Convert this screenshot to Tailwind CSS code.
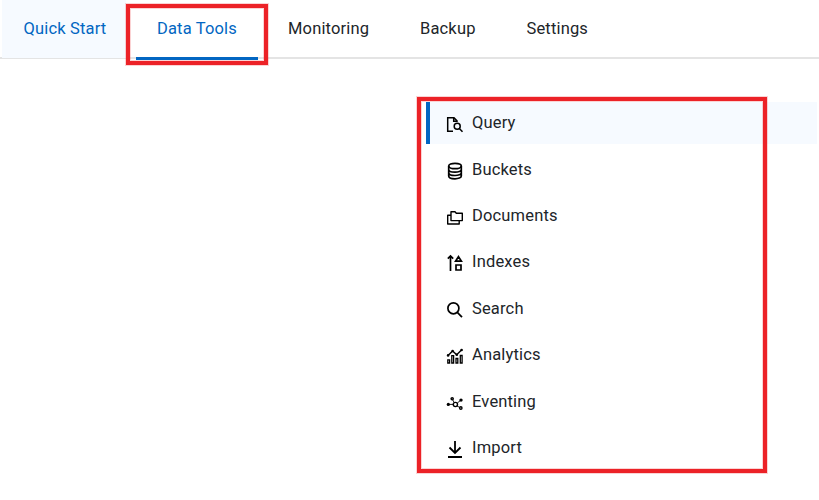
<!DOCTYPE html>
<html lang="en">
<head>
<meta charset="utf-8">
<title>Data Tools</title>
<script src="https://cdn.jsdelivr.net/npm/@tailwindcss/browser@4"></script>
</head>
<body class="relative h-[500px] w-[819px] overflow-hidden bg-white font-['Roboto',sans-serif] text-[16.5px] leading-6 tracking-[0.16px] text-[#212529]">
<nav class="flex h-[59px] whitespace-nowrap border-b-2 border-[#e4e4e4]">
  <a class="ml-[2px] h-[58px] w-[124px] bg-[#f6faff] pl-[21.5px] pt-[17px] text-[#0266c2]">Quick Start</a>
  <a class="ml-[10px] h-[60px] w-[122px] border-b-[3px] border-[#0266c2] pl-[21px] pt-[17px] text-[#0266c2]">Data Tools</a>
  <a class="ml-[9px] w-[123px] pl-[21px] pt-[17px]">Monitoring</a>
  <a class="ml-[9px] w-[98px] pl-[21px] pt-[17px]">Backup</a>
  <a class="ml-[9px] pl-[20.5px] pt-[17px]">Settings</a>
</nav>
<ul class="ml-[426px] mt-[43px] flex w-[391px] flex-col gap-[4.43px]">
  <li class="flex h-[42px] items-center border-l-4 border-[#0266c2] bg-[#f6faff] pl-[16px]">
    <svg class="mt-1 mr-2 size-[18px]" viewBox="0 0 18 18" fill="none" stroke="#000" stroke-width="1.5"><path d="M7 15.3H1.7V1.7H8L11 4.7V6M7.7 2V5.2H11"/><circle cx="11.2" cy="10.2" r="3"/><path d="M13.3 12.4L16.5 15.8"/></svg>
    <span>Query</span></li>
  <li class="flex h-[42px] items-center pl-[20px]">
    <svg class="mt-[3px] mr-2 size-[18px]" viewBox="0 0 18 18" fill="none" stroke="#000" stroke-width="1.7"><ellipse cx="9" cy="4" rx="6.3" ry="2.7"/><path d="M2.7 4V14C2.7 17.7 15.3 17.7 15.3 14V4M2.7 7.4C2.7 11 15.3 11 15.3 7.4M2.7 10.7C2.7 14.4 15.3 14.4 15.3 10.7"/></svg>
    <span class="pt-px">Buckets</span></li>
  <li class="flex h-[42px] items-center pl-[20px]">
    <svg class="mt-[5px] mr-2 size-[18px]" viewBox="0 0 18 18" fill="none" stroke="#000" stroke-width="1.4" stroke-linejoin="round"><path d="M5 2.8H9L10.3 4.3H16.3V11.6H5ZM4.7 6.2H1.7V15H13.2V12"/></svg>
    <span>Documents</span></li>
  <li class="flex h-[42px] items-center pl-[20px]">
    <svg class="mt-[2px] mr-2 size-[18px]" viewBox="0 0 18 18" fill="none" stroke="#000" stroke-width="1.7"><path d="M4.5 17V2M1.8 4.7L4.5 2L7.2 4.7M12.5 2.6L15.4 7.2H9.6ZM10 11H15V16H10Z"/></svg>
    <span>Indexes</span></li>
  <li class="flex h-[42px] items-center pl-[20px]">
    <svg class="mt-[3px] mr-2 size-[18px]" viewBox="0 0 18 18" fill="none" stroke="#000" stroke-width="1.7"><circle cx="7.4" cy="7.3" r="5.5"/><path d="M11.3 11.3L16 16.2"/></svg>
    <span>Search</span></li>
  <li class="flex h-[42px] items-center pl-[20px]">
    <svg class="mt-[2px] mr-2 size-[18px]" viewBox="0 0 18 18" fill="none" stroke="#000" stroke-width="1.3"><path d="M1.8 16V12.8H3.6V16ZM5.8 16V8.7H7.6V16ZM10 16V11.5H11.8V16ZM14.3 16V8.5H16.1V16Z"/><path stroke-width="1.4" d="M2 8.5L6.6 4L10.7 7.8L16 2.6"/><g fill="#000" stroke="none"><circle cx="2.1" cy="8.4" r="1.3"/><circle cx="6.6" cy="4" r="1.3"/><circle cx="10.8" cy="7.7" r="1.3"/><circle cx="15.6" cy="3" r="1.3"/></g></svg>
    <span>Analytics</span></li>
  <li class="flex h-[42px] items-center pl-[20px]">
    <svg class="mt-[4px] mr-2 size-[18px]" viewBox="0 0 18 18" fill="none" stroke="#000" stroke-width="1.4"><circle cx="9.4" cy="9.5" r="2.1"/><path stroke-width=".9" d="M3 9.4H7M8.2 7.6L6.8 5M11.3 8L14.5 5.4M11 11L13.7 12.4"/><circle cx="6.2" cy="3.8" r="1.1"/><circle cx="14.8" cy="13" r="1.2"/><g fill="#000" stroke="none"><circle cx="2.3" cy="9.4" r="1.6"/><circle cx="15" cy="5.1" r="1.7"/></g></svg>
    <span>Eventing</span></li>
  <li class="flex h-[42px] items-center pl-[20px]">
    <svg class="mt-[3px] mr-2 size-[18px]" viewBox="0 0 18 18" fill="none" stroke="#000" stroke-width="1.8"><path d="M9 1V12.7M3.5 7.5L9 13L14.5 7.5M2 17H16"/></svg>
    <span>Import</span></li>
</ul>
<div class="absolute left-[126px] top-[4px] h-[61px] w-[142px] border-4 border-[#ec2227] shadow-[inset_0_0_0_1px_#ec222733,0_0_0_1px_#ec222733]"></div>
<div class="absolute left-[417px] top-[97px] h-[376px] w-[350px] border-4 border-[#ec2227] shadow-[inset_0_0_0_1px_#ec222733,0_0_0_1px_#ec222733]"></div>
</body>
</html>
